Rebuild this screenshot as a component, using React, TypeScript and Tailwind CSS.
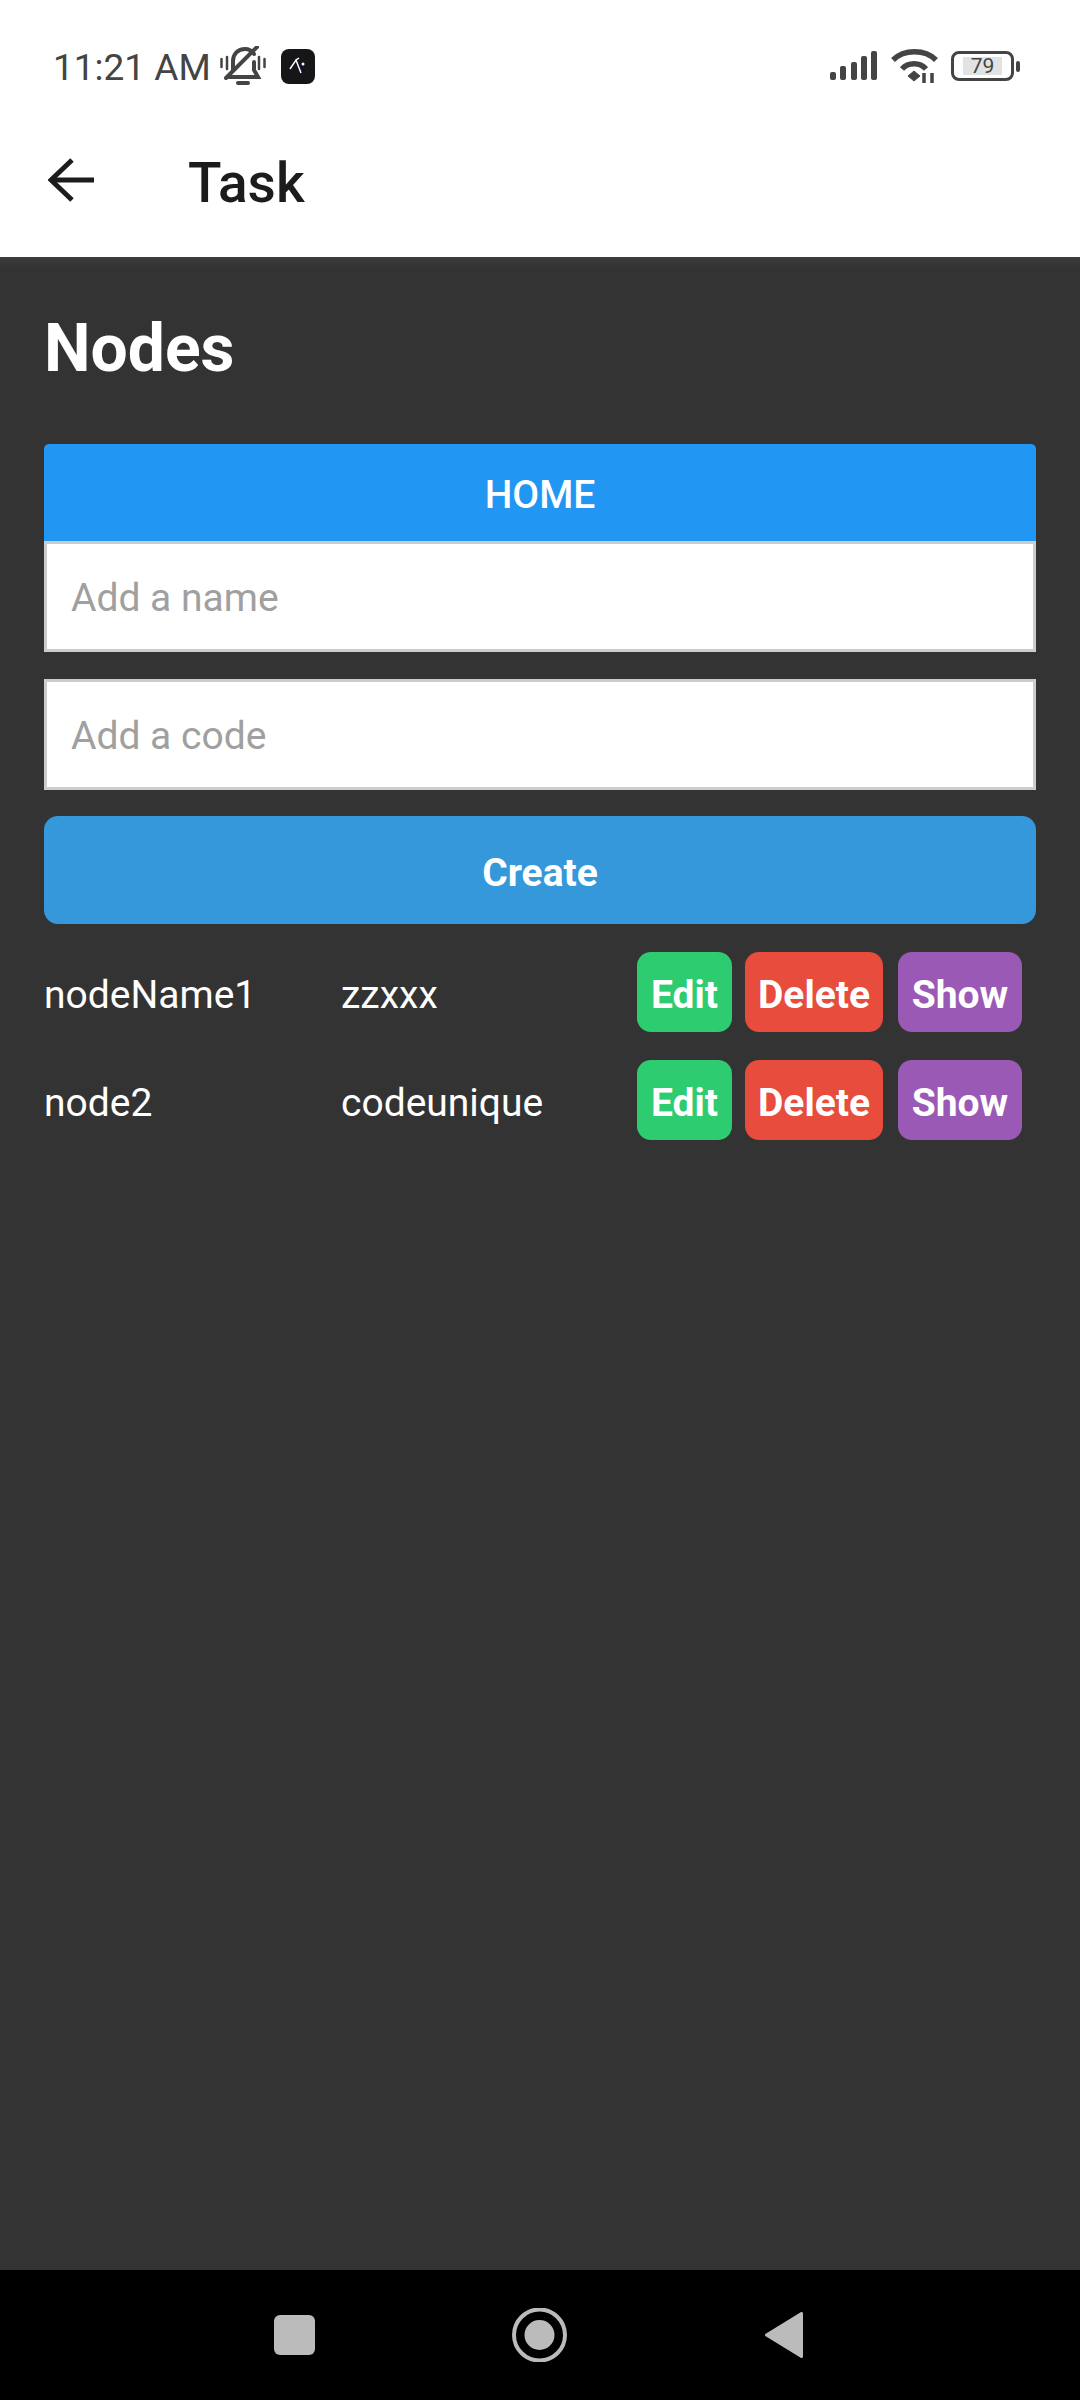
const nodes = [
  { name: "nodeName1", code: "zzxxx" },
  { name: "node2", code: "codeunique" },
];

const StatusBar = () => (
  <div className="flex h-[106px] items-center justify-between pt-[26px] pl-[53px] pr-[60px] text-[#444444]">
    <div className="flex items-center">
      <span className="pt-[2px] text-[37px] leading-none">11:21 AM</span>
      <svg className="ml-[9px]" width="46" height="40" viewBox="0 0 46 40" fill="none" stroke="#444444" strokeWidth="4" strokeLinecap="round">
        <path d="M13 24V15C13 8 18 3 25 3C29 3 32 5 34 8" />
        <path d="M34 16V24L38 31H9" />
        <path d="M6 32L37 1" />
        <path d="M1.5 13V21M7 11V23M39 11V23M44.5 13V21" strokeWidth="2.5" />
        <path d="M18 37H28" strokeWidth="4" />
      </svg>
      <div className="ml-[15px] flex h-[35px] w-[34px] items-center justify-center rounded-[8px] bg-[#161618]">
        <svg width="22" height="22" viewBox="0 0 22 22" fill="none" stroke="#ffffff">
          <path d="M12 8L16 18" stroke="#12102c" strokeWidth="4" />
          <path d="M3 14L9 5L14 18" strokeWidth="1.5" />
          <path d="M9 5L12 3" strokeWidth="1.5" />
          <circle cx="16" cy="9" r="1.5" fill="#ffffff" stroke="none" />
        </svg>
      </div>
    </div>
    <div className="flex items-center">
      <svg width="48" height="32" viewBox="0 0 48 32" fill="#444444">
        <rect x="0" y="22" width="6" height="8" rx="2" />
        <rect x="10" y="16" width="6" height="14" rx="2" />
        <rect x="21" y="12" width="6" height="18" rx="2" />
        <rect x="31" y="6" width="6" height="24" rx="2" />
        <rect x="41" y="1" width="6" height="29" rx="2" />
      </svg>
      <svg className="ml-[13px]" width="47" height="36" viewBox="0 0 47 36" fill="none" stroke="#444444" strokeWidth="5.5">
        <path d="M2 12C13 1 34 1 45 12" />
        <path d="M11 21C17 14 29 14 35 21" />
        <path d="M17 28L23 23L29 28L23 33Z" fill="#444444" strokeWidth="1" />
        <path d="M33 25V35M41 25V35" strokeWidth="3.5" />
      </svg>
      <div className="ml-[13px] flex h-[30px] w-[63px] items-center justify-center rounded-[8px] border-[3px] border-[#444444]">
        <span className="flex h-[18px] w-[39px] items-center justify-center bg-[#e2e2e2] text-[21px] leading-none">79</span>
      </div>
      <div className="ml-[2px] h-[11px] w-[4px] rounded-full bg-[#444444]" />
    </div>
  </div>
);

const AppBar = () => (
  <div className="flex h-[151px] items-center bg-white pl-[48px]">
    <svg className="mb-[3px]" width="46" height="44" viewBox="0 0 46 44" fill="none" stroke="#1c1c1c" strokeWidth="5">
      <path d="M46 22H4" />
      <path d="M24 2L3 22L24 42" />
    </svg>
    <span className="ml-[94px] pt-[3px] text-[55px] font-medium leading-none text-[#1c1c1c]">Task</span>
  </div>
);

const RowButton = ({ label, color, width }: { label: string; color: string; width: string }) => (
  <div className={`flex h-[80px] items-center justify-center rounded-[14px] pt-[6px] text-[39px] font-bold text-white ${color} ${width}`}>
    {label}
  </div>
);

const NodeRow = ({ name, code }: { name: string; code: string }) => (
  <div className="flex h-[80px] items-center text-[39px] text-white">
    <span className="w-[297px] pt-[6px]">{name}</span>
    <span className="w-[296px] pt-[6px]">{code}</span>
    <div className="flex gap-[13px]">
      <RowButton label="Edit" color="bg-[#2ecc71]" width="w-[95px]" />
      <RowButton label="Delete" color="bg-[#e74c3c]" width="w-[138px]" />
      <RowButton label="Show" color="bg-[#9b59b6] ml-[2px]" width="w-[124px]" />
    </div>
  </div>
);

const Field = ({ label }: { label: string }) => (
  <div className="flex h-[111px] items-center border-[3px] border-[#cccccc] bg-white pl-[24px] pt-[4px] text-[39px] text-[#a0a0a0]">
    {label}
  </div>
);

export default function App() {
  return (
    <div className="flex h-[2400px] w-[1080px] flex-col bg-white font-['Roboto',sans-serif]">
      <StatusBar />
      <AppBar />
      <div className="flex flex-grow flex-col bg-[#333333] bg-gradient-to-b from-[#3d3d3d] to-[#333333] to-[10px] px-[44px] pt-[52px]">
        <div className="text-[66px] font-bold leading-[80px] text-white">Nodes</div>
        <div className="mt-[55px] flex h-[97px] items-center justify-center rounded-t-[5px] bg-[#2196f3] pt-[5px] text-[39px] font-medium text-white">
          HOME
        </div>
        <Field label="Add a name" />
        <div className="mt-[27px]">
          <Field label="Add a code" />
        </div>
        <div className="mt-[26px] flex h-[108px] items-center justify-center rounded-[14px] bg-[#3498db] pt-[6px] text-[39px] font-bold text-white">
          Create
        </div>
        <div className="mt-[28px] flex flex-col gap-[28px]">
          {nodes.map((node) => (
            <NodeRow key={node.name} name={node.name} code={node.code} />
          ))}
        </div>
      </div>
      <div className="flex h-[130px] items-center bg-black pl-[274px]">
        <div className="h-[40px] w-[41px] rounded-[6px] bg-[#bbbbbb]" />
        <svg className="ml-[197px]" width="55" height="54" viewBox="0 0 55 54" fill="none">
          <circle cx="27.5" cy="27" r="25.5" stroke="#bbbbbb" strokeWidth="4" />
          <circle cx="27.5" cy="27" r="15" fill="#bbbbbb" />
        </svg>
        <svg className="ml-[198px]" width="38" height="46" viewBox="0 0 38 46" fill="#bbbbbb" stroke="#bbbbbb" strokeWidth="3" strokeLinejoin="round">
          <path d="M36.5 1.5V44.5L1.5 23Z" />
        </svg>
      </div>
    </div>
  );
}
